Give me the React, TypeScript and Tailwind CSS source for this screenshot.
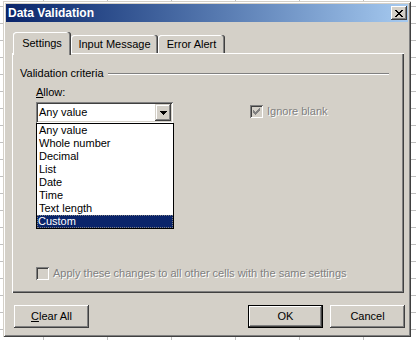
import React from "react";

const pixels = (rows: string[], color: string) =>
  rows.flatMap((r, y) =>
    r.split("").map((c, x) =>
      c === "X" ? <rect key={`${x}-${y}`} x={x} y={y} width={1} height={1} fill={color} /> : null
    )
  );

const CloseGlyph = () => (
  <svg width="8" height="7" viewBox="0 0 8 7" shapeRendering="crispEdges">
    {pixels(["XX....XX", ".XX..XX.", "..XXXX..", "...XX...", "..XXXX..", ".XX..XX.", "XX....XX"], "#000")}
  </svg>
);

const ArrowGlyph = () => (
  <svg width="7" height="4" viewBox="0 0 7 4" shapeRendering="crispEdges">
    {pixels(["XXXXXXX", ".XXXXX.", "..XXX..", "...X..."], "#000")}
  </svg>
);

const CheckGlyph = ({ color }: { color: string }) => (
  <svg width="7" height="7" viewBox="0 0 7 7" shapeRendering="crispEdges">
    {pixels(["......X", ".....XX", "X...XXX", "XX.XXX.", "XXXXX..", ".XXX...", "..X...."], color)}
  </svg>
);

const Checkbox = ({ checked }: { checked?: boolean }) => (
  <div className="w-[13px] h-[13px] shrink-0 bg-[#d4d0c8] flex items-center justify-center shadow-[inset_1px_1px_#808080,inset_-1px_-1px_#fff,inset_2px_2px_#404040,inset_-2px_-2px_#d4d0c8]">
    {checked && <CheckGlyph color="#808080" />}
  </div>
);

const Button = ({ children, isDefault }: { children: React.ReactNode; isDefault?: boolean }) =>
  isDefault ? (
    <div className="w-[75px] h-[23px] border border-black">
      <div className="w-full h-full flex items-center justify-center shadow-[inset_-1px_-1px_#404040,inset_1px_1px_#fff,inset_-2px_-2px_#808080,inset_2px_2px_#d4d0c8]">
        {children}
      </div>
    </div>
  ) : (
    <div className="w-[75px] h-[23px] flex items-center justify-center shadow-[inset_-1px_-1px_#404040,inset_1px_1px_#fff,inset_-2px_-2px_#808080,inset_2px_2px_#d4d0c8]">
      {children}
    </div>
  );

const items = ["Any value", "Whole number", "Decimal", "List", "Date", "Time", "Text length", "Custom"];

export default function App() {
  return (
    <div className="w-[416px] h-[340px] overflow-hidden pt-[1px] pl-[3px] bg-white bg-[linear-gradient(to_right,#c0c0c0_1px,transparent_1px),linear-gradient(to_bottom,#c0c0c0_1px,transparent_1px)] bg-size-[64px_17px] bg-position-[43px_6px] font-['Liberation_Sans',Arial,sans-serif] text-[11px] leading-[13px] text-black">
      <div className="w-[408px] h-[336px] bg-[#d4d0c8] p-[3px] flex flex-col shadow-[inset_1px_1px_#d4d0c8,inset_-1px_-1px_#404040,inset_2px_2px_#fff,inset_-2px_-2px_#808080]">
        {/* title bar */}
        <div className="h-[18px] shrink-0 flex items-center pl-[2px] pr-[1px] bg-gradient-to-r from-[#0a246a] to-[#a6caf0]">
          <span className="flex-1 text-white font-bold text-[12px] leading-none">Data Validation</span>
          <div className="w-[16px] h-[14px] bg-[#d4d0c8] flex items-center justify-center pt-[1px] shadow-[inset_-1px_-1px_#404040,inset_1px_1px_#fff,inset_-2px_-2px_#808080,inset_2px_2px_#d4d0c8]">
            <CloseGlyph />
          </div>
        </div>

        {/* tabs */}
        <div className="mt-[10px] ml-[7px] h-[21px] flex items-end">
          <div className="relative z-10 w-[58px] h-[23px] -mb-[2px] bg-[#d4d0c8] rounded-t-[3px] flex items-center justify-center pb-[1px] shadow-[inset_-1px_0_#404040,inset_-2px_0_#808080,inset_1px_1px_#fff]">
            Settings
          </div>
          <div className="w-[87px] h-[18px] rounded-t-[3px] flex items-center justify-center shadow-[inset_-1px_0_#404040,inset_-2px_0_#808080,inset_1px_1px_#fff]">
            Input Message
          </div>
          <div className="w-[67px] h-[18px] rounded-t-[3px] flex items-center justify-center shadow-[inset_-1px_0_#404040,inset_-2px_0_#808080,inset_1px_1px_#fff]">
            Error Alert
          </div>
        </div>

        {/* tab pane */}
        <div className="relative ml-[6px] mr-[4px] h-[240px] flex flex-col shadow-[inset_1px_1px_#fff,inset_-1px_-1px_#404040,inset_-2px_-2px_#808080]">
          <div className="mt-[14px] ml-[8px] mr-[15px] flex items-center">
            <span>Validation criteria</span>
            <div className="flex-1 ml-[4px] h-[2px] border-t border-[#808080] border-b-white border-b" />
          </div>

          <div className="mt-[6px] ml-[24px]">
            <span className="underline underline-offset-[1px]">A</span>llow:
          </div>

          <div className="mt-[3px] ml-[24px] flex items-start">
            <div className="w-[137px] h-[21px] bg-white flex items-center p-[2px] shadow-[inset_1px_1px_#808080,inset_-1px_-1px_#fff,inset_2px_2px_#404040,inset_-2px_-2px_#d4d0c8]">
              <span className="flex-1 pl-[1px]">Any value</span>
              <div className="w-[16px] h-[17px] bg-[#d4d0c8] flex items-center justify-center shadow-[inset_-1px_-1px_#404040,inset_1px_1px_#d4d0c8,inset_-2px_-2px_#808080,inset_2px_2px_#fff]">
                <ArrowGlyph />
              </div>
            </div>
            <div className="ml-[77px] mt-[3px] flex items-center">
              <Checkbox checked />
              <span className="ml-[4px] text-[#808080] [text-shadow:1px_1px_0_#fff]">Ignore blank</span>
            </div>
          </div>

          <div className="mt-auto mb-[13px] ml-[24px] flex items-center">
            <Checkbox />
            <span className="ml-[4px] text-[#808080] [text-shadow:1px_1px_0_#fff]">
              Apply these changes to all other cells with the same settings
            </span>
          </div>

          {/* open dropdown list */}
          <div className="absolute left-[24px] top-[70px] w-[138px] h-[106px] bg-white border border-black flex flex-col">
            {items.map((it) =>
              it === "Custom" ? (
                <div key={it} className="h-[13px] bg-[#0a246a] text-white pl-[1px] outline-1 outline-dotted outline-offset-[-1px] outline-[#808080]">
                  {it}
                </div>
              ) : (
                <div key={it} className="h-[13px] pl-[2px]">
                  {it}
                </div>
              )
            )}
          </div>
        </div>

        {/* buttons */}
        <div className="mt-[12px] ml-[8px] flex items-center">
          <Button>
            <span>
              <span className="underline underline-offset-[1px]">C</span>lear All
            </span>
          </Button>
          <div className="ml-[159px]">
            <Button isDefault>OK</Button>
          </div>
          <div className="ml-[7px]">
            <Button>Cancel</Button>
          </div>
        </div>
      </div>
    </div>
  );
}
